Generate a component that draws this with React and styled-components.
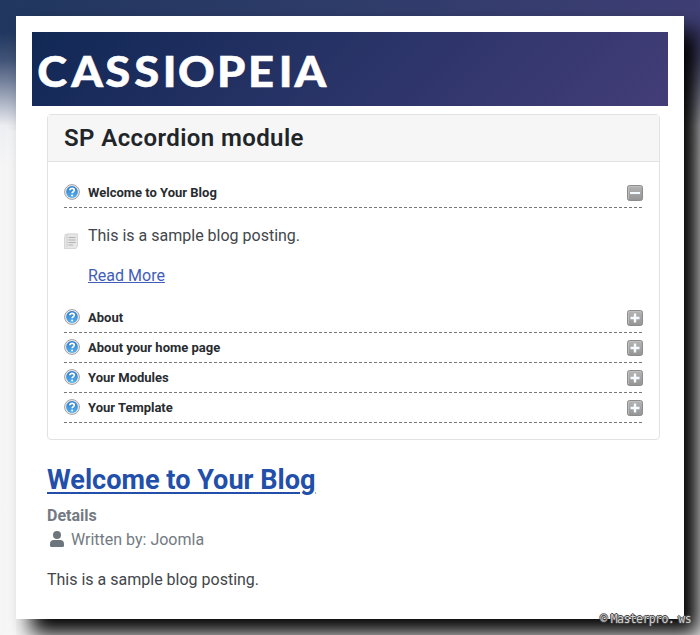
import React from "react";
import styled, { createGlobalStyle } from "styled-components";

const Global = createGlobalStyle`
  * { box-sizing: border-box; }
  body { margin: 0; font-family: Roboto, "Liberation Sans", sans-serif; color: #42464b; overflow: hidden; }
`;

const Backdrop = styled.div`
  position: relative;
  width: 700px;
  height: 635px;
  padding: 16px;
  overflow: hidden;
  background:
    linear-gradient(to right, transparent 4px, #fff8 16px) 0 130px / 16px 505px no-repeat,
    linear-gradient(to bottom, #f6f6f700 32px, #c5cad933 60px, #d6dae577 82px, #dfe2eaba 102px, #eeeff3 126px, #f6f6f7 165px),
    linear-gradient(100deg, #21375f, #303d6b 45%, #443f78);
`;

const Sheet = styled.div`
  width: 668px;
  height: 603px;
  padding: 16px;
  background: #fff;
  box-shadow: 15px 15px 20px #000;
`;

const Banner = styled.header`
  height: 73.5px;
  background: linear-gradient(135deg, #112855, #283366 48%, #433d77);
`;

const Logo = styled.svg`
  display: block;
  width: 300px;
  height: 73px;
  fill: #fff;
  stroke: #fff;
  font: 900 42.5px Lato, sans-serif;
`;

const Content = styled.main`
  padding: 8px 8px 0 15px;
`;

const Card = styled.section`
  height: 326.5px;
  border: 1px solid #e2e2e3;
  border-radius: 4px;
`;

const CardTitle = styled.h2`
  height: 47px;
  margin: 0;
  padding: 0 16px;
  border-bottom: 1px solid #e2e2e3;
  background: #f6f6f6;
  font-size: 24px;
  font-weight: 600;
  letter-spacing: 0.4px;
  line-height: 46px;
  color: #212529;
`;

const Accordion = styled.div`
  padding: 16px;
`;

const ItemHeader = styled.button`
  display: flex;
  align-items: flex-start;
  width: 100%;
  height: 30px;
  padding: 6px 0 0;
  border: 0;
  background: repeating-linear-gradient(to right, #777 0 3px, transparent 3px 5px) bottom / 100% 1px no-repeat;
  font: 700 13px/17px Roboto, sans-serif;
  color: #282c30;
  text-align: left;
`;

const ItemLabel = styled.span`
  flex: 1;
  margin-left: 8px;
`;

const Icon = styled.svg`
  display: block;
  flex: none;
  width: 16px;
  height: 16px;
`;

const ToggleGlyph = styled(Icon)`
  margin-top: 1px;
`;

const ItemBody = styled.div`
  display: flex;
  gap: 8px;
  height: 95px;
  padding-top: 16px;
`;

const NoteIcon = styled(Icon)`
  margin-top: 9px;
`;

const Paragraph = styled.p`
  margin: 0 0 16px;
  font-size: 16px;
  line-height: 24px;
`;

const Link = styled.a`
  font-size: 16px;
  line-height: 24px;
  display: block;
  color: #3f5db9;
  text-decoration: underline;
`;

const Title = styled.h2`
  margin: 21.5px 0 0;
  font-size: 27.1px;
  font-weight: 700;
  line-height: 36px;
  color: #224faa;
  text-decoration: underline;
  text-decoration-thickness: 2px;
  text-underline-offset: 3px;
`;

const Meta = styled.dl`
  margin: 6px 0 16px;
  font-size: 16px;
  line-height: 24px;
  color: #737a82;
`;

const MetaTitle = styled.dt`
  font-weight: 700;
`;

const MetaRow = styled.dd`
  display: flex;
  align-items: center;
  margin: 0;
`;

const UserIcon = styled.svg`
  width: 14px;
  height: 16px;
  margin: 0 7px 1px 3px;
  fill: #6d757d;
`;

const Watermark = styled.div`
  position: absolute;
  right: 9px;
  bottom: 8px;
  font: 11.5px/16px "DejaVu Sans Mono", monospace;
  letter-spacing: -0.6px;
  word-spacing: -2px;
  color: #d2d2d2;
  white-space: pre;
  text-shadow: -1px 0 #444, 1px 0 #444, 0 -1px #444, 0 1px #444, 0 0 2px #444;
`;

const HelpIcon = () => (
  <Icon viewBox="0 0 16 16">
    <defs>
      <linearGradient id="help" x1="0" y1="0" x2="0" y2="1">
        <stop offset="0" stopColor="#2d7bcb" />
        <stop offset="1" stopColor="#58b0ed" />
      </linearGradient>
    </defs>
    <circle cx="8" cy="8" r="7.4" fill="#f0efed" stroke="#a0a0a5" />
    <circle cx="8" cy="8" r="5.9" fill="url(#help)" />
    <path d="M5.8 6.2C6 3.7 10.3 3.7 10.3 6.3C10.3 7.8 8.1 7.7 8.1 9.3" fill="none" stroke="#fff" strokeWidth="1.6" />
    <circle cx="8.1" cy="11.5" r="1" fill="#fff" />
  </Icon>
);

const ToggleIcon = ({ open }) => (
  <ToggleGlyph viewBox="0 0 16 16">
    <defs>
      <linearGradient id="toggle" x1="0" y1="0" x2="0" y2="1">
        <stop offset="0" stopColor="#b5b5b5" />
        <stop offset="1" stopColor="#949494" />
      </linearGradient>
    </defs>
    <rect x=".5" y=".5" width="15" height="15" rx="2" fill="url(#toggle)" stroke="#8c8c8c" />
    <path d="M1.5 14V2.5Q1.5 1.5 2.5 1.5H14" fill="none" stroke="#c5c5c5" strokeOpacity=".7" />
    <path d={open ? "M3 8H13" : "M3.5 8H12.5M8 3.5V12.5"} stroke="#f6fbff" strokeWidth={open ? 2 : 2.4} />
  </ToggleGlyph>
);

const DocumentIcon = () => (
  <NoteIcon viewBox="0 0 16 16">
    <path d="M1 1.5H3V.8H13.5V13L12 15.5H.5V4H1Z" fill="#e6e6e6" stroke="#cfcfcf" strokeWidth=".8" />
    <path d="M4.5 4.5H11.5M4.5 7H11.5M4.5 9.5H11.5M4.5 12H9" stroke="#b2b2b2" />
    <path d="M3 2V14" stroke="#cfcfcf" />
  </NoteIcon>
);

const Row = ({ label, open }) => (
  <ItemHeader aria-expanded={!!open}>
    <HelpIcon />
    <ItemLabel>{label}</ItemLabel>
    <ToggleIcon open={open} />
  </ItemHeader>
);

const collapsedItems = ["About", "About your home page", "Your Modules", "Your Template"];

export default function App() {
  return (
    <Backdrop>
      <Global />
      <Sheet>
        <Banner>
          <Logo viewBox="0 0 300 73">
            <text
              y="55.3"
              x="5 36.8 68.8 96 122.7 137.2 173.8 202.8 231.8 246.4"
              transform="scale(1.065 1)"
              strokeWidth="0.5"
            >
              CASSIOPEIA
            </text>
          </Logo>
        </Banner>
        <Content>
          <Card>
            <CardTitle>SP Accordion module</CardTitle>
            <Accordion>
              <Row label="Welcome to Your Blog" open />
              <ItemBody>
                <DocumentIcon />
                <div>
                  <Paragraph>This is a sample blog posting.</Paragraph>
                  <Link>Read More</Link>
                </div>
              </ItemBody>
              {collapsedItems.map((label) => <Row key={label} label={label} />)}
            </Accordion>
          </Card>
          <Title>Welcome to Your Blog</Title>
          <Meta>
            <MetaTitle>Details</MetaTitle>
            <MetaRow>
              <UserIcon viewBox="0 0 14 16">
                <circle cx="7" cy="4" r="4" />
                <path d="M4 9H10Q14 9 14 13V14.5Q14 16 12.5 16H1.5Q0 16 0 14.5V13Q0 9 4 9Z" />
              </UserIcon>
              Written by: Joomla
            </MetaRow>
          </Meta>
          <Paragraph>This is a sample blog posting.</Paragraph>
        </Content>
      </Sheet>
      <Watermark>© Masterpro. ws</Watermark>
    </Backdrop>
  );
}
